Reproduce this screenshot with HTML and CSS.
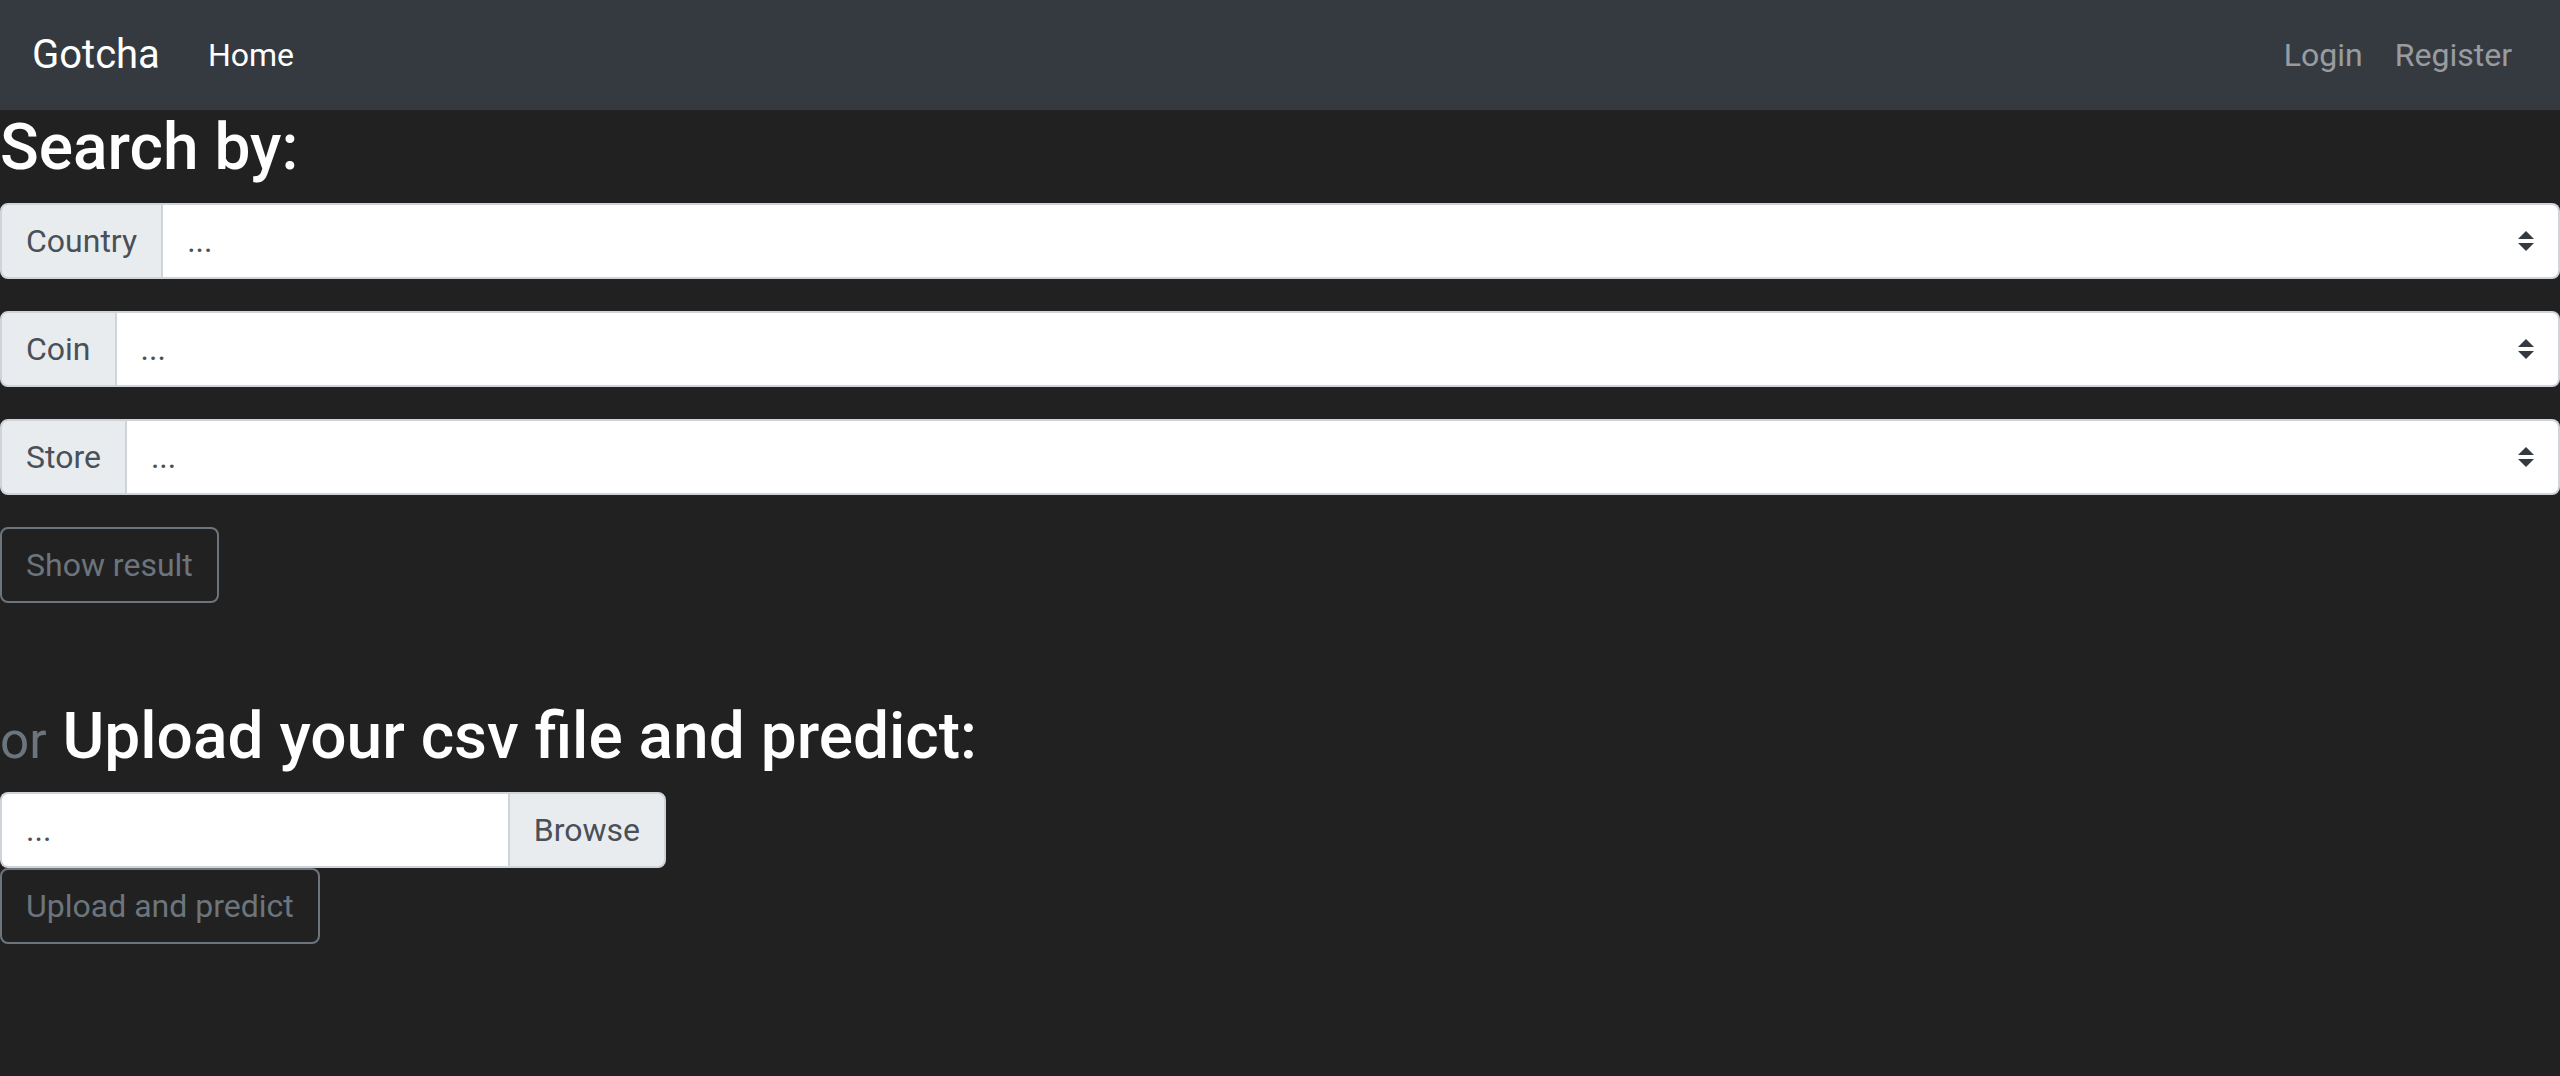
FILE: index.html
```html
<!DOCTYPE html>
<html lang="en">
<head>
<meta charset="utf-8">
<title>Gotcha</title>
<link rel="stylesheet" href="styles.css">
</head>
<body>
<nav class="navbar">
  <div class="nav-left">
    <a class="brand" href="#">Gotcha</a>
    <a class="nav-link active" href="#">Home</a>
  </div>
  <div class="nav-right">
    <a class="nav-link" href="#">Login</a>
    <a class="nav-link" href="#">Register</a>
  </div>
</nav>
<main class="content">
  <h2 class="title">Search by:</h2>
  <div class="input-group">
    <span class="prepend">Country</span>
    <div class="select"><span>...</span><svg class="arrow" viewBox="0 0 4 5" width="16" height="20"><path fill="#343a40" d="M2 0L0 2h4zm0 5L0 3h4z"/></svg></div>
  </div>
  <div class="input-group">
    <span class="prepend">Coin</span>
    <div class="select"><span>...</span><svg class="arrow" viewBox="0 0 4 5" width="16" height="20"><path fill="#343a40" d="M2 0L0 2h4zm0 5L0 3h4z"/></svg></div>
  </div>
  <div class="input-group">
    <span class="prepend">Store</span>
    <div class="select"><span>...</span><svg class="arrow" viewBox="0 0 4 5" width="16" height="20"><path fill="#343a40" d="M2 0L0 2h4zm0 5L0 3h4z"/></svg></div>
  </div>
  <button class="btn-outline" type="button">Show result</button>

  <h2 class="title upload"><small class="muted">or</small> Upload your csv file and predict:</h2>
  <div class="file-group">
    <span class="file-label">...</span>
    <span class="browse">Browse</span>
  </div>
  <button class="btn-outline" type="button">Upload and predict</button>
</main>
</body>
</html>
```
FILE: styles.css
```css
* { box-sizing: border-box; }
html, body {
  margin: 0;
  padding: 0;
}
body {
  background: #212121;
  font-family: Roboto, "Liberation Sans", Arial, sans-serif;
  color: #ffffff;
  font-size: 32px;
  line-height: 1.5;
  min-height: 1076px;
}
a { text-decoration: none; }

.navbar {
  height: 110px;
  background: #343a40;
  display: flex;
  align-items: center;
  justify-content: space-between;
  padding: 0 32px;
}
.nav-left, .nav-right {
  display: flex;
  align-items: center;
}
.brand {
  color: #fff;
  font-size: 40px;
  line-height: 60px;
  margin-right: 32px;
}
.nav-link {
  color: rgba(255,255,255,0.5);
  font-size: 32px;
  line-height: 48px;
  padding: 0 16px;
}
.nav-link.active { color: #fff; }

.content {
  display: flex;
  flex-direction: column;
  align-items: flex-start;
}
.title {
  font-size: 64px;
  font-weight: 500;
  line-height: 1.2;
  margin: 0 0 16px 0;
}
.title.upload { margin-top: 96px; }
.muted {
  color: #6c757d;
  font-weight: 400;
  font-size: 80%;
}

.input-group {
  display: flex;
  width: 100%;
  height: 76px;
  margin-bottom: 32px;
}
.prepend {
  background: #e9ecef;
  color: #495057;
  border: 2px solid #ced4da;
  border-radius: 8px 0 0 8px;
  padding: 12px 24px;
  line-height: 48px;
  display: flex;
  align-items: center;
}
.select {
  flex: 1;
  background: #fff;
  color: #495057;
  border: 2px solid #ced4da;
  border-left: none;
  border-radius: 0 8px 8px 0;
  padding: 12px 24px;
  display: flex;
  align-items: center;
  justify-content: space-between;
}
.arrow { display: block; }

.btn-outline {
  font-family: inherit;
  font-size: 32px;
  line-height: 48px;
  color: #6c757d;
  background: transparent;
  border: 2px solid #6c757d;
  border-radius: 8px;
  padding: 12px 24px;
  margin: 0;
}

.file-group {
  display: flex;
  width: 666px;
  height: 76px;
}
.file-label {
  flex: 1;
  background: #fff;
  color: #495057;
  border: 2px solid #ced4da;
  border-right: none;
  border-radius: 8px 0 0 8px;
  padding: 12px 24px;
  line-height: 48px;
}
.browse {
  background: #e9ecef;
  color: #495057;
  border: 2px solid #ced4da;
  border-radius: 0 8px 8px 0;
  padding: 12px 24px;
  line-height: 48px;
}
```
